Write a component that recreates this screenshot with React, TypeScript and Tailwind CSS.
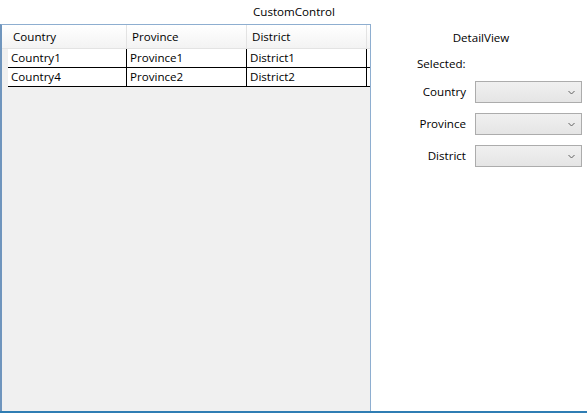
import React from "react";

const rows = [
  ["Country1", "Province1", "District1"],
  ["Country4", "Province2", "District2"],
];

function Combo() {
  return (
    <div className="w-[107px] h-[22px] border border-[#acacac] bg-gradient-to-b from-[#f0f0f0] to-[#e5e5e5] flex items-center justify-end pr-[6px]">
      <svg width="7" height="5" viewBox="0 0 7 5">
        <path d="M0.5 1 L3.5 4 L6.5 1" fill="none" stroke="#606060" strokeWidth="1" />
      </svg>
    </div>
  );
}

export default function App() {
  return (
    <div
      className="w-[587px] h-[413px] bg-white text-[11.6px] text-black flex flex-col overflow-hidden"
      style={{ fontFamily: '"Open Sans", "Noto Sans", sans-serif' }}
    >
      <div className="h-[24px] flex items-center justify-center pl-[1px] leading-none">CustomControl</div>
      <div className="flex flex-1 border-b-2 border-[#2f7db3]">
        {/* Grid */}
        <div className="w-[371px] flex flex-col border-l-2 border-l-[#6f95bd] border-t border-t-[#8eaed0] border-r border-r-[#8eaed0] bg-[#f0f0f0]">
          <div className="flex h-[24px] bg-gradient-to-b from-white to-[#f3f3f3] border-b border-[#e3e3e3]">
            <div className="w-[6px]" />
            <div className="w-[119px] border-r border-[#e3e3e3] flex items-center pl-[5px]">Country</div>
            <div className="w-[120px] border-r border-[#e3e3e3] flex items-center pl-[5px]">Province</div>
            <div className="w-[120px] border-r border-[#e3e3e3] flex items-center pl-[5px]">District</div>
            <div className="flex-1" />
          </div>
          {rows.map((r, i) => (
            <div key={i} className="flex h-[19px]">
              <div className="w-[6px] bg-[#f0f0f0]" />
              <div className="flex flex-1 bg-white border-b border-black">
                <div className="w-[119px] border-r border-black flex items-center pl-[3px]">{r[0]}</div>
                <div className="w-[120px] border-r border-black flex items-center pl-[3px]">{r[1]}</div>
                <div className="w-[120px] border-r border-black flex items-center pl-[3px]">{r[2]}</div>
                <div className="flex-1" />
              </div>
            </div>
          ))}
        </div>
        {/* Detail */}
        <div className="flex-1 flex flex-col">
          <div className="h-[28px] flex items-center justify-center pl-[4px]">DetailView</div>
          <div className="h-[24px] flex items-center pl-[46px]">Selected:</div>
          <div className="flex flex-col gap-[10px] mt-[5px]">
            {["Country", "Province", "District"].map((l) => (
              <div key={l} className="flex items-center h-[22px]">
                <div className="w-[95px] text-right pr-[0px]">{l}</div>
                <div className="ml-[9px]">
                  <Combo />
                </div>
              </div>
            ))}
          </div>
        </div>
      </div>
    </div>
  );
}
